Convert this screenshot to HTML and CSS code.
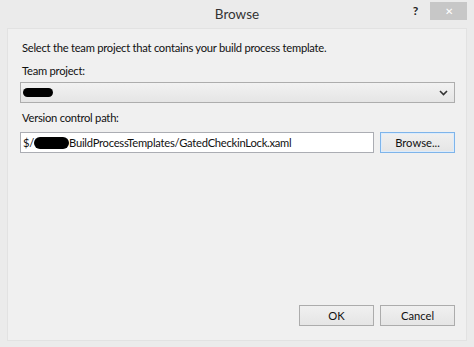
FILE: index.html
```html
<!DOCTYPE html>
<html lang="en">
<head>
    <meta charset="UTF-8">
    <title>Browse</title>
    <link rel="stylesheet" href="styles.css">
</head>
<body>
    <div class="window">
        <div class="titlebar">
            <span></span>
            <span class="title">Browse</span>
            <div class="controls">
                <span class="help">?</span>
                <span class="close">&#x2715;</span>
            </div>
        </div>

        <div class="panel">
            <p class="intro">Select the team project that contains your build process template.</p>

            <label class="label">Team project:</label>
            <div class="combo">
                <span class="redact redact-short"></span>
                <svg class="chevron" width="9" height="6" viewBox="0 0 9 6">
                    <path d="M1 1 L4.5 4.5 L8 1" fill="none" stroke="#333" stroke-width="1.6"/>
                </svg>
            </div>

            <label class="label">Version control path:</label>
            <div class="path-row">
                <div class="textbox">$/<span class="redact redact-path"></span>BuildProcessTemplates/GatedCheckinLock.xaml</div>
                <button class="btn btn-default">Browse...</button>
            </div>

            <div class="footer">
                <button class="btn">OK</button>
                <button class="btn">Cancel</button>
            </div>
        </div>
    </div>
</body>
</html>
```

FILE: styles.css
```css
body { margin: 0; background: #ebebeb; font-family: Lato, "Noto Sans", sans-serif; font-size: 11.2px; letter-spacing: -0.25px; line-height: 16px; color: #111; }
.window { width: 474px; height: 347px; display: flex; flex-direction: column; box-sizing: border-box; }

.titlebar { height: 28px; display: grid; grid-template-columns: 1fr auto 1fr; align-items: start; }
.title { font-size: 13.5px; letter-spacing: 0; color: #333; padding-top: 6px; }
.controls { display: flex; justify-content: flex-end; align-items: flex-start; padding-right: 7px; }
.help { font-weight: bold; font-size: 12px; color: #222; margin: 3px 12px 0 0; }
.close { width: 37px; height: 18px; margin-top: 2px; background: #c7c7c7; color: #fff; font-size: 10px; line-height: 18px; display: flex; align-items: center; justify-content: center; }

.panel { flex: 1; margin: 0 7px 6px 7px; background: #f0f0f0; border: 1px solid #e2e2e2; padding: 0 11px 0 12px; display: flex; flex-direction: column; }
.intro { margin: 11px 0 0 2px; }
.label { display: block; margin: 7px 0 0 2px; }

.combo { height: 19px; margin-top: 3px; border: 1px solid #adadad; background: linear-gradient(#f2f2f2, #e5e5e5); display: flex; align-items: center; justify-content: space-between; padding: 0 6px 0 2px; }
.chevron { display: block; }

.redact { display: inline-block; background: #000; border-radius: 5px; }
.redact-short { width: 30px; height: 9px; }
.redact-path { width: 35px; height: 12px; vertical-align: -2px; border-radius: 6px; }

.path-row { display: flex; gap: 6px; margin-top: 6px; }
.textbox { flex: 1; height: 19px; line-height: 19px; border: 1px solid #abadb3; background: #fff; padding: 0 2px; white-space: nowrap; overflow: hidden; }

.btn { width: 75px; height: 21px; padding: 0; font: inherit; color: #111; border: 1px solid #acacac; background: linear-gradient(#f0f0f0, #e5e5e5); }
.btn-default { border-color: #7eb4ea; box-shadow: inset 0 0 0 1px #dcecfc; }

.footer { margin-top: auto; margin-bottom: 14px; display: flex; justify-content: flex-end; gap: 6px; }
```
